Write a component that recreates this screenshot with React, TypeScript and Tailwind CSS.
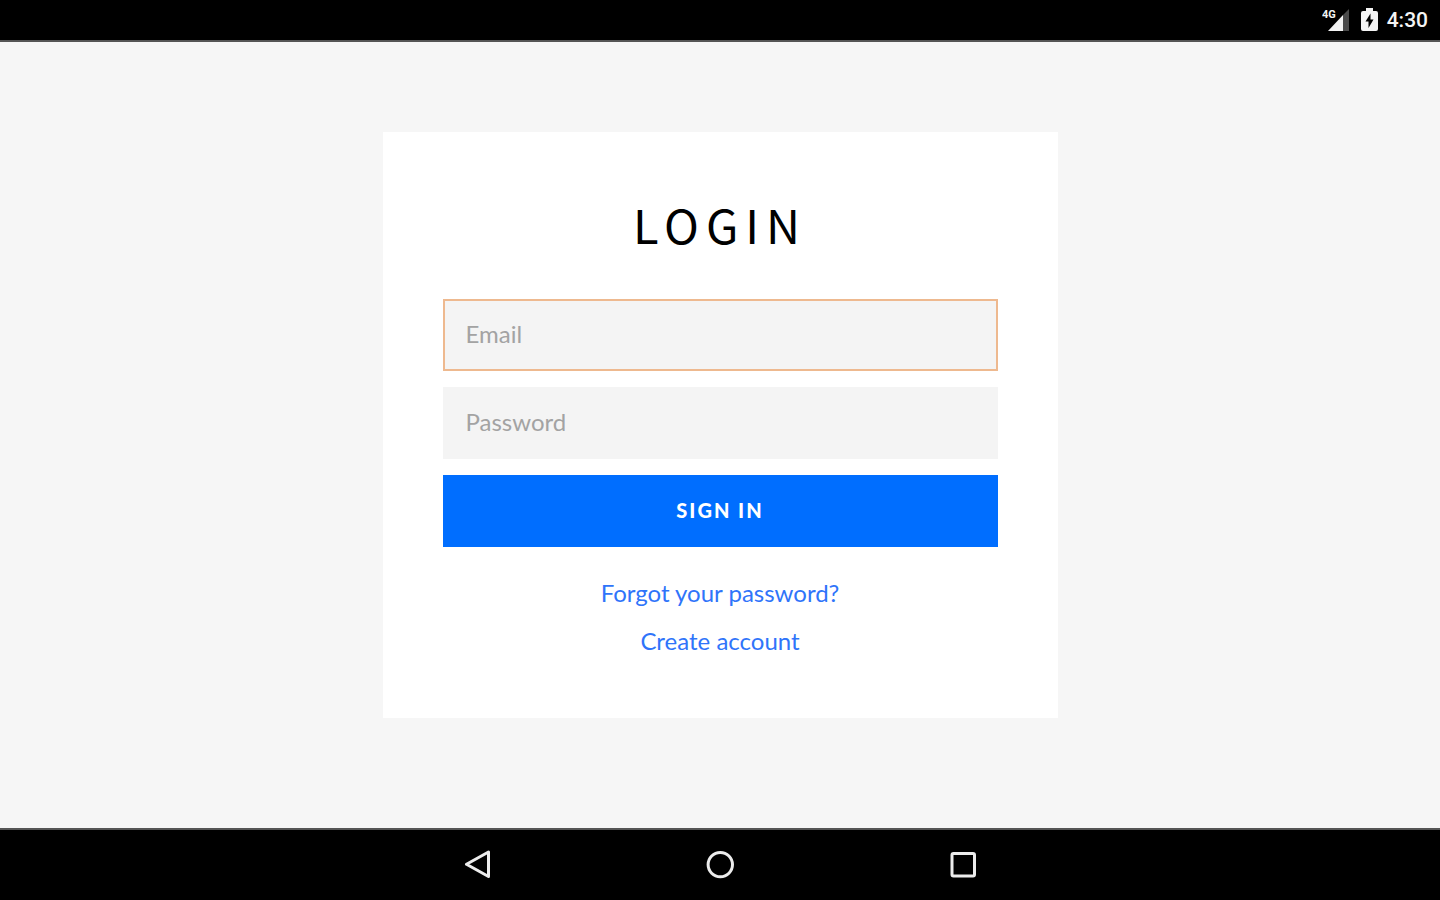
const SignalIcon = () => (
  <svg width="28" height="24" viewBox="0 0 28 24" aria-hidden="true">
    <path d="M27 1V23H21V7Z" fill="#4a4a4a" />
    <path d="M21 7V23H6Z" fill="#f4f4f4" />
    <text
      x="0"
      y="10"
      fontSize="11"
      fontWeight="700"
      fill="#f4f4f4"
      className="font-['Roboto',sans-serif]"
    >
      4G
    </text>
  </svg>
);

const BatteryIcon = () => (
  <svg width="17" height="24" viewBox="0 0 17 24" aria-hidden="true">
    <path
      d="M5 0H12V3H15Q17 3 17 5V21Q17 23 15 23H2Q0 23 0 21V5Q0 3 2 3H5Z"
      fill="#f4f4f4"
    />
    <path d="M9.5 5.5L4.5 13.5H7.5V20L12.5 11.5H9.5Z" fill="#000" />
  </svg>
);

const navItems = [
  {
    label: "Back",
    icon: <path d="M26.5 2V26.5L4.5 14.3Z" strokeLinejoin="round" />,
  },
  { label: "Home", icon: <circle cx="15.3" cy="14.6" r="12.2" /> },
  {
    label: "Recent apps",
    icon: <rect x="4" y="3.5" width="22.5" height="22.5" rx="1.5" />,
  },
];

const fields = [
  {
    type: "email",
    label: "Email",
    border: "border-[#eeb98f]",
  },
  {
    type: "password",
    label: "Password",
    border: "border-[#f4f4f4]",
  },
];

const StatusBar = () => (
  <header className="flex h-[42px] items-center justify-end border-b-2 border-[#555] bg-black pr-3">
    <SignalIcon />
    <span className="ml-[11px]">
      <BatteryIcon />
    </span>
    <time className="ml-[9px] font-['Roboto',sans-serif] text-[21px] leading-6 font-medium text-[#f4f4f4]">
      4:30
    </time>
  </header>
);

const NavBar = () => (
  <nav className="flex h-[72px] items-center justify-center border-t-2 border-[#555] bg-black">
    {navItems.map(({ label, icon }) => (
      <button
        key={label}
        type="button"
        aria-label={label}
        className="flex w-[243px] justify-center"
      >
        <svg
          width="30"
          height="30"
          viewBox="0 0 30 30"
          fill="none"
          stroke="#ececec"
          strokeWidth="3"
        >
          {icon}
        </svg>
      </button>
    ))}
  </nav>
);

const LoginForm = () => (
  <form
    className="w-full max-w-[675px] bg-white px-[60px] pt-16 pb-[61px]"
    onSubmit={(e) => e.preventDefault()}
  >
    <h1 className="text-center font-['Noto_Sans_CJK_SC',sans-serif] text-[47px] leading-[56px] tracking-[7px] text-black">
      LOGIN
    </h1>

    <div className="mt-[47px] flex flex-col gap-4">
      {fields.map(({ type, label, border }) => (
        <input
          key={type}
          type={type}
          aria-label={label}
          placeholder={label}
          className={`h-[72px] w-full border-2 bg-[#f4f4f4] px-[21px] pb-1 text-[24px] text-black outline-none placeholder:text-[#a3a3a3] ${border}`}
        />
      ))}
      <button
        type="submit"
        className="h-[72px] w-full bg-[#006eff] pb-0.5 text-xl font-black tracking-[2px] text-white"
      >
        SIGN IN
      </button>
    </div>

    <div className="mt-[30px] flex flex-col items-center gap-4 text-[24px] leading-8 text-[#2f74fa]">
      <a href="#forgot">Forgot your password?</a>
      <a href="#create">Create account</a>
    </div>
  </form>
);

const App = () => {
  return (
    <div className="flex min-h-screen flex-col bg-[#f6f6f6] font-['Lato',sans-serif]">
      <StatusBar />
      <main className="flex flex-1 items-start justify-center pt-[90px] pb-16">
        <LoginForm />
      </main>
      <NavBar />
    </div>
  );
};

export default App;
